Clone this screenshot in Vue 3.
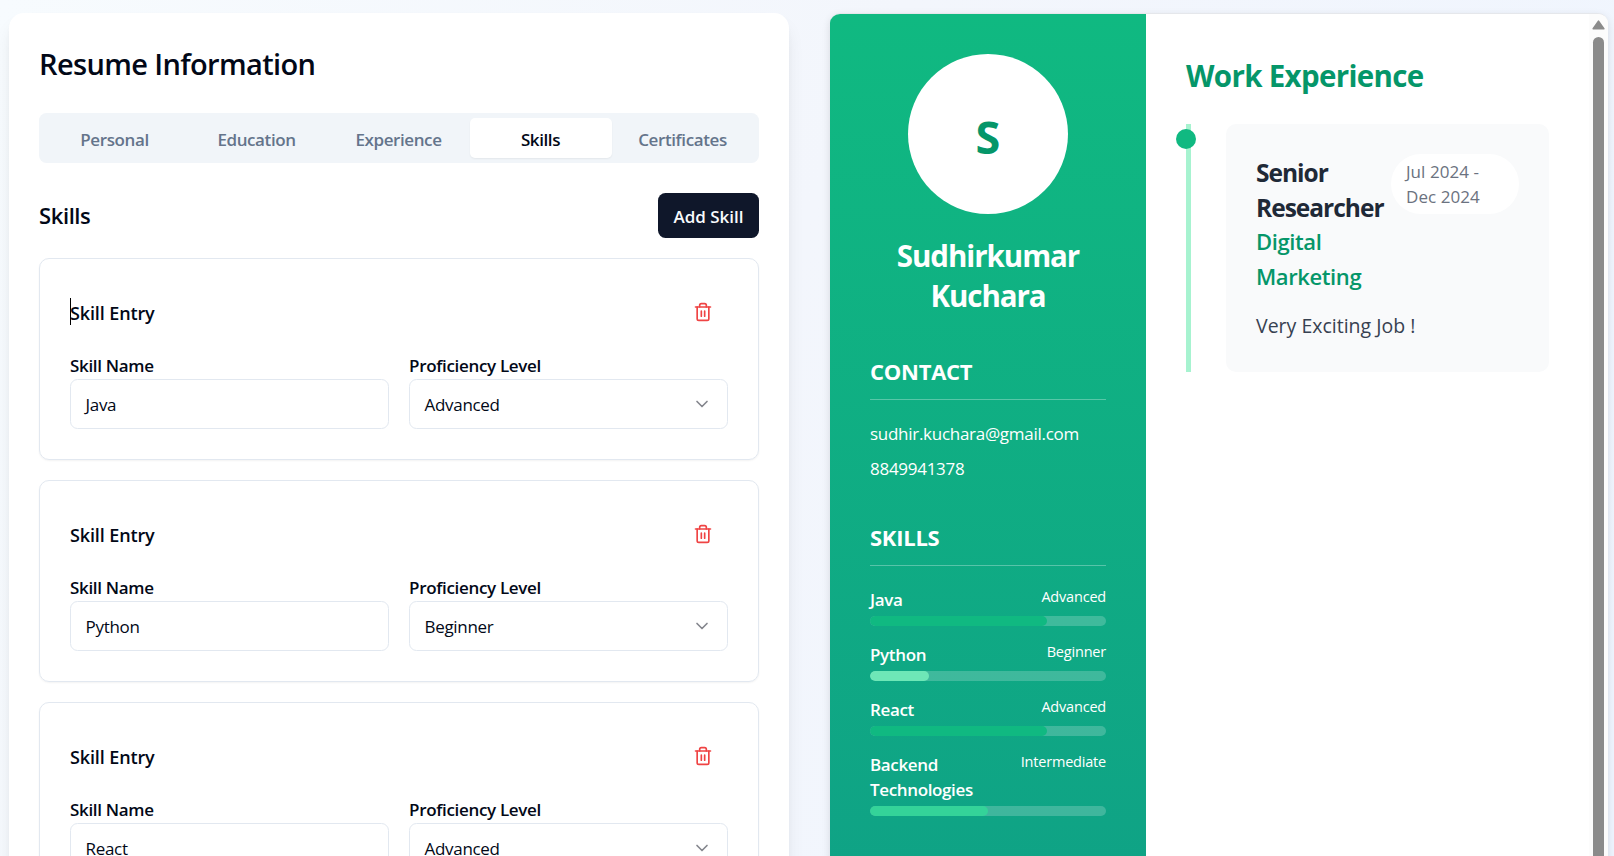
<script setup>
const tabs = ['Personal', 'Education', 'Experience', 'Skills', 'Certificates']
const entries = [
  { name: 'Java', level: 'Advanced' },
  { name: 'Python', level: 'Beginner' },
  { name: 'React', level: 'Advanced' },
]
const skills = [
  { name: 'Java', level: 'Advanced', pct: 75, color: '#10b981' },
  { name: 'Python', level: 'Beginner', pct: 25, color: '#6ee7b7' },
  { name: 'React', level: 'Advanced', pct: 75, color: '#10b981' },
  { name: 'Backend Technologies', level: 'Intermediate', pct: 50, color: '#34d399' },
]
</script>

<template>
  <div class="page">
    <section class="editor">
      <h1 class="title">Resume Information</h1>
      <nav class="tabs">
        <button v-for="t in tabs" :key="t" class="tab" :class="{ active: t === 'Skills' }">{{ t }}</button>
      </nav>
      <div class="bar">
        <h2 class="subtitle">Skills</h2>
        <button class="add">Add Skill</button>
      </div>
      <div class="entries">
        <article v-for="(e, i) in entries" :key="e.name" class="entry">
          <div class="entry-head">
            <h3 class="entry-title"><i v-if="i === 0" class="caret"></i>Skill Entry</h3>
            <button class="trash">
              <svg width="20" height="20" viewBox="0 0 24 24" fill="none" stroke="#ef4444" stroke-width="2" stroke-linecap="round" stroke-linejoin="round">
                <path d="M3 6h18" />
                <path d="M19 6v14c0 1-1 2-2 2H7c-1 0-2-1-2-2V6" />
                <path d="M8 6V4c0-1 1-2 2-2h4c1 0 2 1 2 2v2" />
                <path d="M10 11v6M14 11v6" />
              </svg>
            </button>
          </div>
          <div class="fields">
            <div>
              <label class="label">Skill Name</label>
              <div class="field">{{ e.name }}</div>
            </div>
            <div>
              <label class="label">Proficiency Level</label>
              <div class="field">
                <span>{{ e.level }}</span>
                <svg class="chev" width="20" height="20" viewBox="0 0 24 24" fill="none" stroke="#84868d" stroke-width="2" stroke-linecap="round" stroke-linejoin="round"><path d="m6 9 6 6 6-6" /></svg>
              </div>
            </div>
          </div>
        </article>
      </div>
    </section>

    <section class="preview">
      <aside class="side">
        <div class="avatar">S</div>
        <h2 class="name">Sudhirkumar<br />Kuchara</h2>
        <div class="block">
          <h3 class="side-h">CONTACT</h3>
          <p class="contact">sudhir.kuchara@gmail.com</p>
          <p class="contact phone">8849941378</p>
        </div>
        <div class="block">
          <h3 class="side-h">SKILLS</h3>
          <div v-for="s in skills" :key="s.name" class="skill">
            <div class="skill-row">
              <span class="skill-name">{{ s.name }}</span>
              <span class="skill-level">{{ s.level }}</span>
            </div>
            <div class="track"><div class="fill" :style="{ width: s.pct + '%', background: s.color }"></div></div>
          </div>
        </div>
      </aside>
      <main class="main">
        <h2 class="work">Work Experience</h2>
        <div class="timeline">
          <div class="dot"></div>
          <div class="job">
            <div class="job-top">
              <div>
                <h3 class="role">Senior<br />Researcher</h3>
                <h4 class="company">Digital<br />Marketing</h4>
              </div>
              <div class="pill">Jul 2024 -<br />Dec 2024</div>
            </div>
            <p class="desc">Very Exciting Job !</p>
          </div>
        </div>
      </main>
      <div class="scroll">
        <svg class="arrow" width="13" height="10" viewBox="0 0 13 10"><path d="M6.5 1.2 11.8 8.8H1.2Z" fill="#8b8b8b" stroke="#8b8b8b" stroke-width="1.6" stroke-linejoin="round" /></svg>
        <div class="thumb"></div>
      </div>
    </section>
  </div>
</template>

<style>
html, body { overflow: hidden; }
</style>

<style scoped>
* { box-sizing: border-box; margin: 0; }
.page {
  height: 856px;
  overflow: hidden;
  padding: 13px 6px 0 9px;
  display: flex;
  align-items: flex-start;
  gap: 41px;
  background: linear-gradient(115deg, #f7fbfe 0%, #f3f6fc 45%, #eff5ff 100%);
  font-family: "Open Sans", "Noto Sans", sans-serif;
  color: #020817;
}
button { border: 0; font-family: inherit; background: none; padding: 0; color: inherit; }
.editor {
  width: 780px;
  height: 1000px;
  padding: 30px;
  background: #fff;
  border-radius: 15px;
  box-shadow: 0 12px 19px -4px rgba(0, 0, 0, .1), 0 5px 8px -5px rgba(0, 0, 0, .1);
}
.title { font-size: 29px; line-height: 40px; height: 40px; padding-top: 1px; font-weight: 600; letter-spacing: -.64px; margin-bottom: 30px; }
.tabs { display: flex; height: 50px; padding: 5px; border-radius: 7.5px; background: #f1f5f9; }
.tab { flex: 1; padding: 2px 1px 0 0; font-size: 17px; font-weight: 600; letter-spacing: -.4px; color: #64748b; border-radius: 5px; }
.tab.active { background: #fff; color: #020817; box-shadow: 0 1px 2px rgba(0, 0, 0, .06); }
.bar { display: flex; justify-content: space-between; align-items: center; height: 45px; margin: 30px 0 20px; }
.subtitle { font-size: 22px; font-weight: 600; letter-spacing: -.4px; padding-bottom: 2px; }
.add { width: 101px; height: 45px; padding-top: 1px; border-radius: 7.5px; background: #0f172a; color: #f8fafc; font-size: 17px; font-weight: 600; letter-spacing: -.04px; }
.entries { display: flex; flex-direction: column; gap: 20px; }
.entry { height: 202px; border: 1px solid #e2e8f0; border-radius: 10px; padding: 30px 30px 0; box-shadow: 0 1px 2px rgba(0, 0, 0, .05); }
.entry-head { display: flex; justify-content: space-between; align-items: center; height: 45px; margin-bottom: 20px; }
.entry-title { position: relative; padding-top: 2px; font-size: 18px; font-weight: 600; letter-spacing: -.12px; }
.caret { position: absolute; left: 0; top: -1px; width: 1px; height: 27px; background: #000; }
.trash { width: 50px; height: 45px; display: flex; align-items: center; justify-content: center; }
.fields { display: grid; grid-template-columns: 1fr 1fr; gap: 20px; }
.label { display: block; height: 25px; line-height: 23px; font-size: 17px; font-weight: 600; letter-spacing: -.32px; }
.field { height: 50px; border: 1px solid #e2e8f0; border-radius: 7.5px; padding: 2px 15px 0 14.5px; display: flex; align-items: center; justify-content: space-between; font-size: 17px; line-height: 24px; letter-spacing: -.3px; }
.chev { margin-top: -2px; }
.preview {
  width: 778px;
  height: 1000px;
  display: flex;
  border-top: 1px solid #e5e7eb;
  border-radius: 10px 10px 0 0;
  overflow: hidden;
  background: #fff;
  box-shadow: 0 3px 8px rgba(0, 0, 0, .12);
}
.side { width: 316px; padding: 40px; color: #fff; background: linear-gradient(180deg, #10b981 0%, #0f9f86 1000px); }
.avatar { width: 160px; height: 160px; margin: 0 auto 20px; padding-top: 4px; border-radius: 50%; background: #fff; color: #059669; font-size: 45px; font-weight: 700; display: flex; align-items: center; justify-content: center; }
.name { height: 80px; padding-top: 2px; font-size: 29.5px; line-height: 40px; font-weight: 700; text-align: center; letter-spacing: -1.05px; }
.block { margin-top: 40px; }
.side-h { font-size: 22px; line-height: 35px; height: 46px; font-weight: 700; letter-spacing: -.25px; border-bottom: 1px solid rgba(255, 255, 255, .3); margin-bottom: 20px; }
.contact { height: 25px; font-size: 17px; line-height: 27px; letter-spacing: -.28px; margin-bottom: 10px; }
.phone { margin-bottom: 0; }
.skill { margin-bottom: 15px; }
.skill-row { display: flex; justify-content: space-between; align-items: flex-start; padding-top: 1px; margin-bottom: 4px; }
.skill-name { width: 120px; font-size: 17px; line-height: 25px; font-weight: 600; letter-spacing: -.36px; }
.skill-level { font-size: 14.5px; line-height: 20px; letter-spacing: -.2px; }
.track { height: 10px; border-radius: 5px; background: rgba(255, 255, 255, .2); overflow: hidden; }
.fill { height: 10px; border-radius: 5px; }
.main { width: 443px; padding: 40px; }
.work { height: 40px; padding-top: 2px; font-size: 29.5px; line-height: 40px; font-weight: 700; color: #059669; letter-spacing: -.68px; margin-bottom: 30px; }
.timeline { position: relative; border-left: 5px solid #a7f3d0; padding-left: 35px; height: 248px; }
.dot { position: absolute; left: -15px; top: 5px; width: 20px; height: 20px; border-radius: 50%; background: #10b981; }
.job { height: 248px; width: 323px; border-radius: 10px; background: #f9fafb; padding: 30px; }
.job-top { display: flex; justify-content: space-between; align-items: flex-start; }
.role { height: 70px; padding-top: 1px; font-size: 24.5px; line-height: 35px; font-weight: 700; color: #1f2937; letter-spacing: -1px; }
.company { font-size: 22px; line-height: 35px; font-weight: 600; color: #059669; letter-spacing: -.4px; }
.pill { width: 128px; flex-shrink: 0; height: 60px; padding: 5.4px 15px 4px; border-radius: 30px; background: #fff; color: #6b7280; font-size: 17px; line-height: 25px; letter-spacing: .05px; }
.desc { margin-top: 16px; font-size: 19.5px; line-height: 32.5px; color: #374151; letter-spacing: 0; }
.scroll { width: 19px; background: #fcfcfc; display: flex; flex-direction: column; align-items: center; padding-top: 6px; }
.arrow { flex-shrink: 0; display: block; margin-bottom: 7px; }
.thumb { width: 11px; flex: 1; border-radius: 6px; background: #8b8b8b; }
</style>
